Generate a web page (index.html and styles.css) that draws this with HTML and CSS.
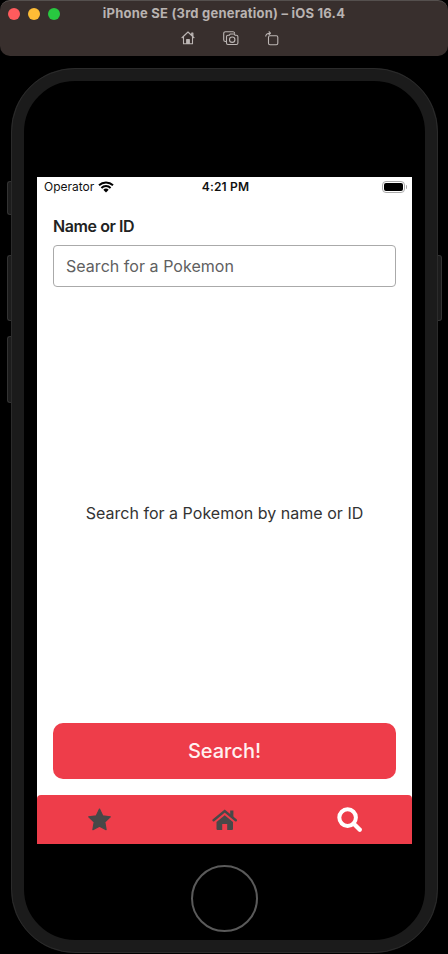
FILE: index.html
```html
<!DOCTYPE html>
<html lang="en">
<head>
<meta charset="utf-8">
<title>iPhone SE Simulator</title>
<link rel="stylesheet" href="styles.css">
</head>
<body>
<header class="toolbar">
  <div class="title-row">
    <div class="lights"><i class="light close"></i><i class="light minimize"></i><i class="light expand"></i></div>
    <div class="title"><span>iPhone SE (3rd generation) – iOS 16.4</span></div>
  </div>
  <div class="tools">
    <svg width="14" height="14" viewBox="0 0 14 14"><path d="M.7 7 7 1l6.3 6M2.5 5.700v7h9v-7M10.700 4.200V2h1.200v3.300"/><path d="M5.700 12.500V8.500h2.600v4Z" fill="#bcb6b4"/></svg>
    <svg width="16" height="15" viewBox="0 0 16 15"><path d="M3.200 10.500H2.500A1.800 1.800 0 0 1 .7 8.700V2.500A1.800 1.800 0 0 1 2.500.700H10a1.800 1.800 0 0 1 1.700 1.800M5 4.300h1.200l1-1.300h4l1 1.300h1.200A1.500 1.500 0 0 1 14.900 5.800V12a1.500 1.500 0 0 1-1.500 1.500H5A1.500 1.500 0 0 1 3.500 12V5.800A1.500 1.500 0 0 1 5 4.300Z"/><circle cx="9.200" cy="8.700" r="2.700"/></svg>
    <svg width="14" height="15" viewBox="0 0 14 15"><rect x="3.500" y="4.700" width="9.300" height="9" rx="1.500"/><path d="M.7 5.500C.8 3.300 2 2.200 5 2.200M3.700.5 5.500 2.200 3.700 4"/></svg>
  </div>
</header>
<main class="device">
  <i class="side mute"></i><i class="side up"></i><i class="side down"></i><i class="side power"></i>
  <div class="screen">
    <div class="status">
      <div class="carrier"><span>Operator</span>
        <svg width="16" height="12" viewBox="0 0 16 12"><path d="M1 4.300a10.200 10.200 0 0 1 14 0M3.400 6.900a6.700 6.700 0 0 1 9.200 0" fill="none" stroke="#000" stroke-width="2"/><path d="M8 11.500 5.300 8.800a4 4 0 0 1 5.400 0Z"/></svg>
      </div>
      <div class="time"><span>4:21 PM</span></div>
      <div class="battery"><i class="cell"></i><i class="nub"></i></div>
    </div>
    <div class="content">
      <label class="label"><span>Name or ID</span></label>
      <div class="field"><span>Search for a Pokemon</span></div>
      <p class="message"><span>Search for a Pokemon by name or ID</span></p>
      <button class="submit"><span>Search!</span></button>
    </div>
    <nav class="tabs">
      <div class="tab"><svg width="24" height="23" viewBox="0 0 24 23"><path d="m11.500 1 3.200 6.800 7.600 1-5.500 5.300 1.300 7.600-6.600-3.600-6.600 3.600 1.300-7.600L.7 8.800l7.600-1Z" stroke="#484848" stroke-width="1.200" stroke-linejoin="round"/></svg></div>
      <div class="tab"><svg width="26" height="22" viewBox="0 0 26 22"><path d="M4.500 13 12.700 6.300l8.300 6.700v7.100a.8.800 0 0 1-.8.800h-5v-6h-5v6h-4.900a.8.800 0 0 1-.8-.8Z"/><path d="M1.600 11.200 12.700 2.100l11.100 9.100" fill="none" stroke="#484848" stroke-width="2.400" stroke-linecap="round"/><path d="M18.200 1.500h3.200v7l-3.200-2.700Z"/></svg></div>
      <div class="tab"><svg width="26" height="26" viewBox="0 0 26 26"><circle cx="10.600" cy="10.600" r="8.300" fill="none" stroke="#fff" stroke-width="4"/><path d="m17 17 5.800 5.800" stroke="#fff" stroke-width="4.300" stroke-linecap="round"/></svg></div>
    </nav>
  </div>
  <div class="home-button"></div>
</main>
</body>
</html>
```
FILE: styles.css
```css
* { box-sizing: border-box; }
body { margin: 0; width: 448px; height: 954px; overflow: hidden; background: #000; font-family: Inter, "Liberation Sans", sans-serif; }
svg { display: block; flex: none; }
span { white-space: nowrap; }

.toolbar { height: 56px; background: #382f2d; border-radius: 10px; border-top: 1px solid #55504e; }
.title-row { display: grid; grid-template-columns: 80px 1fr 80px; height: 25px; align-items: center; }
.lights { display: flex; gap: 8px; padding: 1px 0 0 8px; }
.light { width: 12px; height: 12px; border-radius: 50%; }
.close { background: #ff5b5d; }
.minimize { background: #fdbc36; }
.expand { background: #28c840; }
.title { text-align: center; font-size: 13px; font-weight: 700; letter-spacing: .22px; color: #b9b3b1; line-height: 25px; }
.tools { display: flex; align-items: center; gap: 28px; height: 24px; padding-left: 181px; }
.tools svg { fill: none; stroke: #bcb6b4; stroke-width: 1.1; stroke-linejoin: round; }
.tools svg:last-child { margin-left: -2px; }

.device { position: relative; display: flex; flex-direction: column; align-items: center; width: 427px; height: 885px; margin: 12px 0 0 11px; padding-top: 96px; border: 13px solid #1b1b1b; border-radius: 64px; background: #000; outline: 1px solid #2b2b2b; outline-offset: -1px; }
.side { position: absolute; left: -17px; width: 4px; background: #1c1c1c; border: 1px solid #333; border-right: 0; border-radius: 3px 0 0 3px; }
.mute { top: 100px; height: 34px; }
.up { top: 174px; height: 66px; }
.down { top: 255px; height: 67px; }
.power { left: auto; right: -17px; top: 174px; height: 66px; border: 1px solid #333; border-left: 0; border-radius: 0 3px 3px 0; }
.screen { display: flex; flex-direction: column; width: 375px; height: 667px; background: #fff; flex: none; }
.home-button { width: 67px; height: 67px; margin-top: 21px; border: 2px solid #5a5a5a; border-radius: 50%; flex: none; }

.status { display: grid; grid-template-columns: 1fr auto 1fr; align-items: center; height: 20px; padding: 0 5px 0 7px; font-size: 12px; line-height: 20px; color: #111; }
.carrier { display: flex; align-items: center; gap: 4px; }
.time { font-weight: 600; letter-spacing: .15px; }
.battery { display: flex; align-items: center; justify-self: end; }
.cell { width: 23px; height: 12px; border: 1px solid #aaa; border-radius: 4px; background: #000; background-clip: content-box; padding: 1px; }
.nub { width: 1px; height: 4px; margin-left: 1px; background: #aaa; border-radius: 0 2px 2px 0; }

.content { display: flex; flex-direction: column; flex: 1; padding: 16px 16px; }
.label { height: 24px; margin-top: 1px; font-size: 16px; font-weight: 600; letter-spacing: -.42px; line-height: 24px; color: #222; }
.field { height: 42px; margin-top: 7px; padding-left: 12px; border: 1px solid #aaa; border-radius: 4px; font-size: 16px; letter-spacing: .04px; line-height: 40px; color: #606060; }
.message { flex: 1; display: flex; align-items: center; justify-content: center; margin: 0; padding-top: 16px; font-size: 16px; letter-spacing: .02px; color: #333; }
.submit { height: 56px; padding: 0; border: 0; border-radius: 10px; background: #ee3d4a; color: #fff0f0; font: 500 20px/56px Inter, sans-serif; }
.tabs { display: grid; grid-template-columns: repeat(3, 1fr); height: 49px; background: #ee3d4a; border-radius: 4px 4px 0 0; }
.tab { display: grid; place-items: center; fill: #484848; }
```
